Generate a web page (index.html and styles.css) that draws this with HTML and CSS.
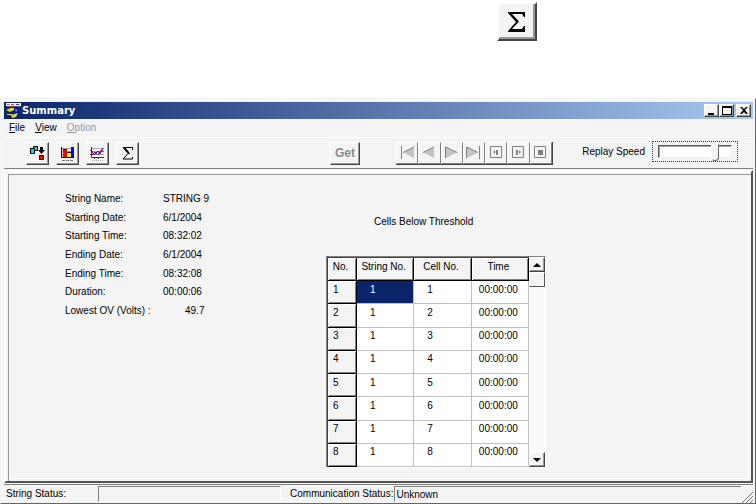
FILE: index.html
```html
<!DOCTYPE html>
<html lang="en">
<head>
  <meta charset="utf-8">
  <title>Summary</title>
  <link rel="stylesheet" href="styles.css">
</head>
<body>
  <div class="page-top">
    <button class="big-button" aria-label="Summary">
      <svg width="20" height="22" viewBox="0 0 20 22"><path d="M1 1h17v5h-1l-2-3H5l7 7.500L5 18h10l2-3h1v6H1v-1l8-9L1 2z"/></svg>
    </button>
  </div>

  <div class="window">
    <div class="title-bar">
      <svg class="app-icon" width="16" height="16" viewBox="0 0 16 16">
        <path d="M4 5h10v6l-3 4H7L4 10z" fill="#0a1a9c"/>
        <path d="M0 0h15v3H0z" fill="#f4f4f4"/>
        <path d="M1 1h2v1H1zM5 1h3v1H5z" fill="#e33"/>
        <path d="M10 1h3v1h-3z" fill="#33c"/>
        <path d="M1 3h14v1H1z" fill="#555"/>
        <path d="M0 7l5-2h3v2L4 9zM5 12l7-2-2 4-4 1zM1 11h5v1H1z" fill="#e8d820"/>
        <path d="M9 6l3 1-2 2z" fill="#888"/>
      </svg>
      <h1>Summary</h1>
      <div class="window-buttons">
        <button aria-label="Minimize"><svg width="10" height="9"><path d="M1 7h6v2H1z"/></svg></button>
        <button aria-label="Maximize"><svg width="10" height="9"><path d="M0 0h10v9H0zM1 2v6h8V2z" fill-rule="evenodd"/></svg></button>
        <button class="close" aria-label="Close"><svg width="10" height="9"><path d="M1 1h2l2 2 2-2h2L6 4l3 4H7L5 6 3 8H1l3-4z"/></svg></button>
      </div>
    </div>

    <div class="menu-bar">
      <button><u>F</u>ile</button>
      <button><u>V</u>iew</button>
      <button disabled><u>O</u>ption</button>
    </div>

    <div class="toolbar">
      <div class="tools">
        <button class="tool" aria-label="Transfer">
          <svg width="17" height="15" viewBox="0 0 17 15">
            <path d="M0 15l8-7v7z" fill="#fff"/>
            <path d="M4.500.500h4v4h-4z" fill="#0dd" stroke="#000"/>
            <path d="M1.500 2.500h4v5h-4z" fill="#0dd" stroke="#000"/>
            <path d="M11 1h3v3h2l-3.500 4L9 4h2z"/>
            <path d="M10.500 9.500h4v4h-4z" fill="#f00" stroke="#000"/>
          </svg>
        </button>
        <button class="tool" aria-label="Bar chart">
          <svg width="17" height="15" viewBox="0 0 17 15">
            <path d="M2 2.500h13M2 5.500h13M2 8.500h13" stroke="#999"/>
            <path d="M4 3h4v8H4z" fill="#f00"/><path d="M8 6h4v5H8z" fill="#fe0"/><path d="M12 1h3v10h-3z" fill="#00f"/>
            <path d="M2.500 1v10.500H15M4 3.500h4M8 6.500h4" fill="none" stroke="#000"/>
            <path d="M3 14.500h12" stroke="#777" stroke-dasharray="3 1"/>
          </svg>
        </button>
        <button class="tool" aria-label="Line chart">
          <svg width="17" height="15" viewBox="0 0 17 15">
            <path d="M2 2.500h13M2 5.500h13M2 8.500h13" stroke="#aaa"/>
            <path d="M2.500 1v10.500H15M1 4.500h2M1 8.500h2M5.500 11v2M9.500 11v2" fill="none" stroke="#333"/>
            <path d="M3 9l3-3 3 3 3-5 3 2" fill="none" stroke="#f00"/>
            <path d="M3 5l2 4 4-4 2 3 3-6" fill="none" stroke="#00f"/>
            <path d="M3 14.500h12" stroke="#aaa" stroke-dasharray="1 1"/>
          </svg>
        </button>
        <button class="tool" aria-label="Summary">
          <svg width="12" height="13" viewBox="0 0 12 13"><path d="M1 .5h9.500V3M1 .5l5 6-5 5.500h9.500V10" fill="none" stroke="#000"/><path d="M1 0h2l5 6.500-1 1z"/></svg>
        </button>
      </div>

      <button class="get" disabled>Get</button>

      <div class="player">
        <button disabled aria-label="First"><svg width="15" height="13"><path class="fill" d="M14 1v11L3 6.500z"/><path class="line" d="M1.500 0v13M3 6.500L14 1"/></svg></button>
        <button disabled aria-label="Back"><svg width="15" height="13"><path class="fill" d="M12 1v11L1 6.500z"/><path class="line" d="M1 6.500L12 1"/></svg></button>
        <button disabled aria-label="Play"><svg width="15" height="13"><path class="fill" d="M2 1v11l11-5.500z"/><path class="line" d="M13 6.500L1.500 1v11"/></svg></button>
        <button disabled aria-label="Last"><svg width="15" height="13"><path class="fill" d="M1 1v11l11-5.500z"/><path class="line" d="M13.500 0v13M12 6.500L.5 1v11"/></svg></button>
        <button disabled aria-label="Step back"><svg width="13" height="13"><path class="line" d="M.5.500h11v11H.5z"/><path class="dark" d="M3 6l2-2v4zM6 4h2v5H6z"/></svg></button>
        <button disabled aria-label="Step forward"><svg width="13" height="13"><path class="line" d="M.5.500h11v11H.5z"/><path class="dark" d="M9 6L7 4v4zM4 4h2v5H4z"/></svg></button>
        <button disabled aria-label="Stop"><svg width="13" height="13"><path class="line" d="M.5.500h11v11H.5z"/><path class="dark" d="M4 4h5v5H4z"/></svg></button>
      </div>

      <div class="speed">
        <label for="speed">Replay Speed</label>
        <div class="speed-focus"><input type="range" id="speed" min="0" max="100" value="82"></div>
      </div>
    </div>

    <div class="panel">
      <dl class="details">
        <dt>String Name:</dt><dd>STRING 9</dd>
        <dt>Starting Date:</dt><dd>6/1/2004</dd>
        <dt>Starting Time:</dt><dd>08:32:02</dd>
        <dt>Ending Date:</dt><dd>6/1/2004</dd>
        <dt>Ending Time:</dt><dd>08:32:08</dd>
        <dt>Duration:</dt><dd>00:00:06</dd>
        <dt>Lowest OV (Volts) :</dt><dd class="number">49.7</dd>
      </dl>

      <div class="cells">
        <h2 id="cells-title">Cells Below Threshold</h2>
        <div class="grid-frame">
          <table aria-labelledby="cells-title">
            <thead>
              <tr><th class="no">No.</th><th>String No.</th><th>Cell No.</th><th>Time</th></tr>
            </thead>
            <tbody>
              <tr><th>1</th><td class="selected">1</td><td>1</td><td>00:00:00</td></tr>
              <tr><th>2</th><td>1</td><td>2</td><td>00:00:00</td></tr>
              <tr><th>3</th><td>1</td><td>3</td><td>00:00:00</td></tr>
              <tr><th>4</th><td>1</td><td>4</td><td>00:00:00</td></tr>
              <tr><th>5</th><td>1</td><td>5</td><td>00:00:00</td></tr>
              <tr><th>6</th><td>1</td><td>6</td><td>00:00:00</td></tr>
              <tr><th>7</th><td>1</td><td>7</td><td>00:00:00</td></tr>
              <tr><th>8</th><td>1</td><td>8</td><td>00:00:00</td></tr>
            </tbody>
          </table>
          <div class="scrollbar">
            <button aria-label="Scroll up"><svg width="8" height="4"><path d="M4 0l4 4H0z"/></svg></button>
            <div class="scroll-thumb"></div>
            <button class="down" aria-label="Scroll down"><svg width="8" height="4"><path d="M0 0h8L4 4z"/></svg></button>
          </div>
        </div>
      </div>
    </div>

    <div class="status-bar">
      <label for="string-status">String Status:</label>
      <input type="text" id="string-status" class="string-status" readonly>
      <label for="comm-status">Communication Status:</label>
      <input type="text" id="comm-status" class="comm-status" value="Unknown" readonly>
      <svg class="grip" width="12" height="12"><path d="M1 12L12 1M5 12l7-7M9 12l3-3" stroke="#777"/></svg>
    </div>
  </div>
</body>
</html>
```
FILE: styles.css
```css
* {
  box-sizing: border-box;
}

body {
  margin: 0;
  min-height: 100vh;
  display: flex;
  flex-direction: column;
  background: #fff;
  color: #000;
  font-family: "Liberation Sans", Arial, sans-serif;
  font-size: 10px;
  line-height: 14px;
}

button, input {
  font: inherit;
  color: inherit;
  padding: 0;
  margin: 0;
  border-radius: 0;
}

button {
  display: flex;
  align-items: center;
  justify-content: center;
  background: #f4f4f4;
  border: 1px solid;
  border-color: #fff #444 #444 #fff;
  box-shadow: inset -1px -1px #999;
}

h1, h2, dl, dd {
  margin: 0;
}

.page-top {
  height: 98px;
  padding: 2px 0 0 497px;
}

.big-button {
  width: 40px;
  height: 39px;
  border-width: 2px;
  box-shadow: inset -2px -2px #999;
}

/* Window frame */
.window {
  flex: 1;
  display: flex;
  flex-direction: column;
  padding: 3px 2px 0 3px;
  background: #f4f4f4;
  border: 1px solid;
  border-color: #f0f0f0 #666 #666 #f0f0f0;
  box-shadow: inset 1px 1px #fff;
}

.title-bar {
  display: flex;
  align-items: center;
  height: 17px;
  padding: 0 2px;
  color: #fff;
  background: linear-gradient(to right, #0a246a, #a6caf0);
}

.title-bar h1 {
  flex: 1;
  font-family: "DejaVu Sans", Verdana, sans-serif;
  font-size: 10px;
  font-weight: bold;
}

.window-buttons {
  display: flex;
}

.window-buttons button {
  width: 15px;
  height: 13px;
}

.window-buttons .close {
  margin-left: 2px;
}

.menu-bar {
  display: flex;
  gap: 10px;
  height: 18px;
  padding-left: 5px;
}

.menu-bar button {
  border: 0;
  box-shadow: none;
  background: none;
}

.menu-bar button:disabled {
  color: #999;
}

/* Toolbar */
.toolbar {
  display: flex;
  align-items: center;
  height: 32px;
  padding-left: 22px;
  border-top: 1px solid #fff;
  border-bottom: 1px solid #808080;
}

.tools {
  display: flex;
  gap: 7px;
}

.tool {
  width: 23px;
  height: 23px;
}

.get {
  width: 30px;
  height: 23px;
  margin-left: 191px;
  font-size: 12px;
  font-weight: bold;
}

.get:disabled {
  color: #888;
  text-shadow: 1px 1px #fff;
}

.player {
  display: flex;
  width: 157px;
  margin-left: 36px;
  border-right: 1px solid #444;
  border-bottom: 1px solid #444;
}

.player button {
  flex: 1;
  height: 22px;
  border-color: #fff #808080 #808080 #fff;
  box-shadow: none;
}

.player .fill {
  fill: #c4c4c4;
}

.player .dark {
  fill: #808080;
}

.player .line {
  fill: none;
  stroke: #808080;
}

.speed {
  display: flex;
  align-items: center;
  gap: 7px;
  margin: 0 15px 3px auto;
}

.speed-focus {
  width: 86px;
  height: 21px;
  padding: 0 5px;
  border: 1px dotted #333;
}

.speed-focus input {
  display: block;
  width: 100%;
  height: 19px;
  appearance: none;
  background: none;
}

.speed-focus input::-webkit-slider-runnable-track {
  height: 13px;
  background: #fff;
  border: 1px solid;
  border-color: #555 #eee #eee #555;
  box-shadow: inset 1px 1px #aaa;
}

.speed-focus input::-webkit-slider-thumb {
  appearance: none;
  width: 8px;
  height: 17px;
  margin-top: -2px;
  background: #f4f4f4;
  border: 1px solid;
  border-color: #fff #666 #666 #fff;
  border-radius: 0 0 4px 4px;
}

/* Main panel */
.panel {
  flex: 1;
  display: flex;
  align-items: flex-start;
  margin-top: 1px;
  padding: 18px 3px 12px 59px;
  border: 2px solid;
  border-color: #fff #555 #555 #fff;
  box-shadow: inset 2px 2px #f4f4f4, inset 3px 3px #999, inset -2px -2px #f4f4f4, inset -3px -3px #fff;
}

.details {
  display: grid;
  grid-template-columns: 98px 52px;
  grid-auto-rows: 1fr;
  align-items: center;
  height: 130px;
}

.details .number {
  padding-left: 22px;
}

.cells {
  margin-left: 111px;
}

.cells h2 {
  margin: 25px 0 27px 48px;
  font-size: 10px;
  font-weight: normal;
}

.grid-frame {
  display: flex;
  border: 1px solid;
  border-color: #808080 #fff #fff #808080;
}

table {
  width: 202px;
  height: 210px;
  table-layout: fixed;
  border-collapse: separate;
  border-spacing: 0;
  background: #fff;
  border-left: 1px solid #444;
  border-top: 1px solid #444;
}

th, td {
  padding: 0 3px 5px 0;
  text-align: center;
  font-weight: normal;
  border-right: 1px solid #c0c0c0;
  border-bottom: 1px solid #c0c0c0;
}

th {
  background: #f4f4f4;
  border-color: #000;
  box-shadow: inset 1px 1px #fff, inset -1px -1px #808080;
}

thead th {
  height: 23px;
}

.no {
  width: 29px;
}

tbody th {
  padding-left: 5px;
  text-align: left;
}

td:nth-child(2), td:nth-child(3) {
  padding-left: 13px;
  text-align: left;
}

td.selected {
  color: #fff;
  background: #0a246a;
}

.scrollbar {
  display: flex;
  flex-direction: column;
  width: 16px;
  background: #fafafa;
}

.scrollbar button {
  height: 15px;
}

.scroll-thumb {
  height: 15px;
  background: #f4f4f4;
  border: 1px solid;
  border-color: #fff #555 #555 #fff;
}

.scrollbar .down {
  margin-top: auto;
}

/* Status bar */
.status-bar {
  display: flex;
  align-items: center;
  height: 19px;
  margin-top: 1px;
  padding-left: 2px;
  border-top: 1px solid #808080;
}

.status-bar input {
  height: 16px;
  background: #f4f4f4;
  border: 1px solid;
  border-color: #808080 #fff #fff #808080;
}

.string-status {
  width: 183px;
  margin: 0 9px 0 32px;
}

.status-bar .comm-status {
  flex: 1;
  min-width: 0;
  margin-left: 1px;
  padding-left: 1px;
  border-right: 0;
}

.grip {
  align-self: flex-end;
}
```
